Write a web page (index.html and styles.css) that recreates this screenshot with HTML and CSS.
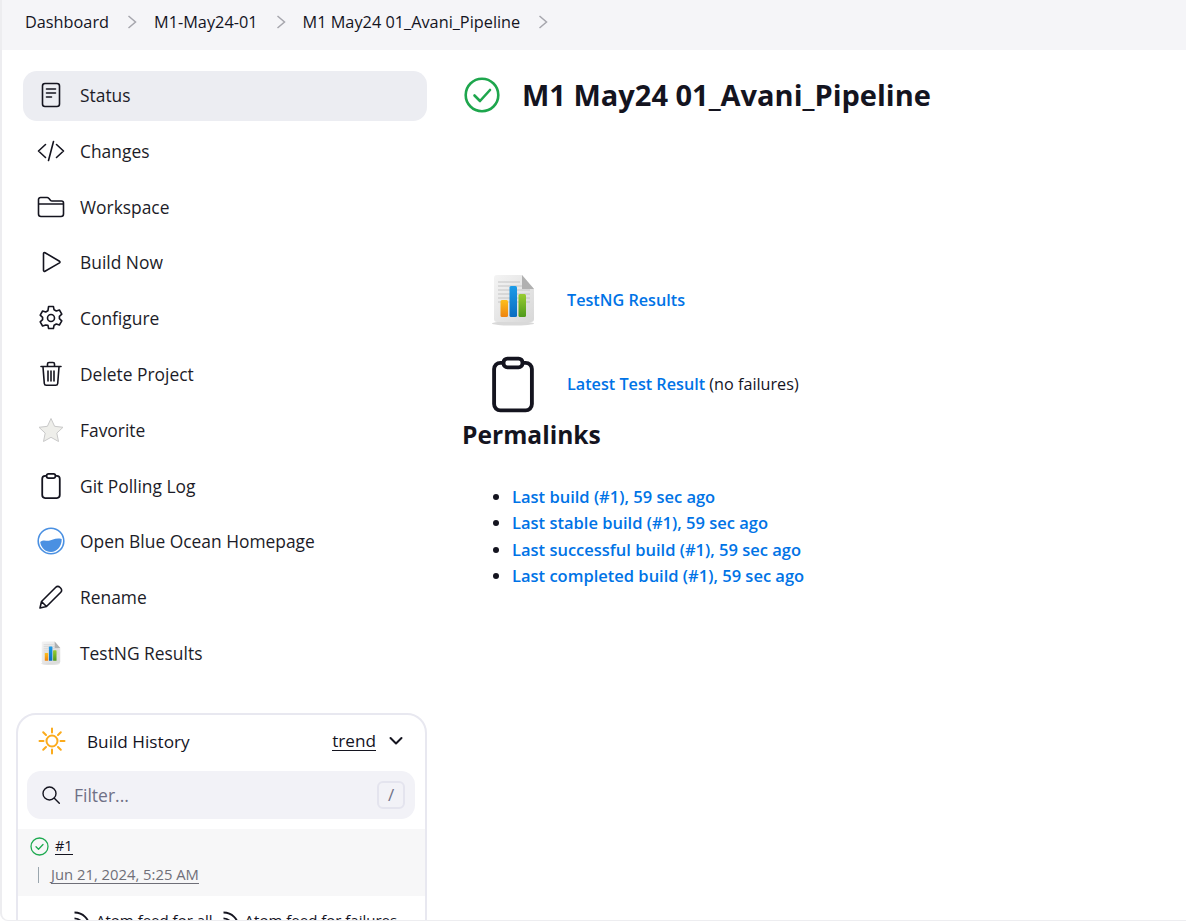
FILE: index.html
```html
<!DOCTYPE html>
<html lang="en">
<head>
<meta charset="utf-8">
<title>M1 May24 01_Avani_Pipeline</title>
<link rel="stylesheet" href="styles.css">
</head>
<body>
<svg class="defs" width="0" height="0" aria-hidden="true">
  <defs>
    <linearGradient id="pg" x1="0" y1="0" x2="1" y2="1"><stop offset="0" stop-color="#f4f4f4"/><stop offset="1" stop-color="#d8d8d8"/></linearGradient>
    <linearGradient id="o" x1="0" y1="0" x2="0" y2="1"><stop offset="0" stop-color="#fdbf1c"/><stop offset="1" stop-color="#ee8410"/></linearGradient>
    <linearGradient id="b" x1="0" y1="0" x2="0" y2="1"><stop offset="0" stop-color="#1c9ce8"/><stop offset="1" stop-color="#0a6cc0"/></linearGradient>
    <linearGradient id="g" x1="0" y1="0" x2="0" y2="1"><stop offset="0" stop-color="#98cc30"/><stop offset="1" stop-color="#4f9a1c"/></linearGradient>
    <symbol id="testng" viewBox="0 0 48 52">
      <ellipse cx="23" cy="49.500" rx="21" ry="2" fill="#d9d9d9"/>
      <path d="M7 1h25l12 14v30a3 3 0 0 1-3 3H7a3 3 0 0 1-3-3V4a3 3 0 0 1 3-3z" fill="url(#pg)"/>
      <path d="M32 1l12 14H32z" fill="#b0b0b0"/>
      <path d="M8 8h22M8 12h24M8 16h32M8 20h32M8 24h32M8 28h32" stroke="#c4c4c4" stroke-width="1"/>
      <rect x="10.500" y="26" width="7.500" height="17" rx="1.500" fill="url(#o)"/>
      <rect x="19.500" y="12" width="7.500" height="31" rx="1.500" fill="url(#b)"/>
      <rect x="28.500" y="20" width="7.500" height="23" rx="1.500" fill="url(#g)"/>
    </symbol>
    <symbol id="clip" viewBox="0 0 24 32">
      <rect x="1.200" y="3.600" width="21.600" height="27.200" rx="3.600" fill="none" stroke="currentColor" stroke-width="2.200"/>
      <rect x="6.600" y="1.200" width="10.800" height="5" rx="2.200" fill="#fff" stroke="currentColor" stroke-width="2.200"/>
    </symbol>
    <symbol id="rss" viewBox="0 0 24 24">
      <path d="M3 3c10 0 18 8 18 18M3 10c6 0 11 5 11 11" fill="none" stroke="currentColor" stroke-width="2.200"/>
    </symbol>
  </defs>
</svg>
<div class="window">
  <nav class="crumbs">
    <a class="crumb">Dashboard</a>
    <svg class="chev" viewBox="0 0 12 16"><path d="M2.500 2l7 6-7 6" /></svg>
    <a class="crumb">M1-May24-01</a>
    <svg class="chev" viewBox="0 0 12 16"><path d="M2.500 2l7 6-7 6" /></svg>
    <a class="crumb">M1 May24 01_Avani_Pipeline</a>
    <svg class="chev" viewBox="0 0 12 16"><path d="M2.500 2l7 6-7 6" /></svg>
  </nav>
  <div class="layout">
    <aside class="side">
      <ul class="tasks">
        <li class="task active">
          <span class="ti"><svg class="ic" width="26" height="26" viewBox="0 0 26 26"><rect x="4.500" y="1.500" width="17" height="23" rx="2.500"/><path d="M8.500 7h9M8.500 11h9M8.500 15h5"/></svg></span>
          <span>Status</span>
        </li>
        <li class="task">
          <span class="ti"><svg class="ic" width="28" height="26" viewBox="0 0 28 26"><path d="M8.500 6.500L1.500 13l7 6.500M19.500 6.500l7 6.500-7 6.500M16.500 3.500l-5 19"/></svg></span>
          <span>Changes</span>
        </li>
        <li class="task">
          <span class="ti"><svg class="ic" width="28" height="22" viewBox="0 0 28 22"><path d="M1.500 5V3.500a2 2 0 0 1 2-2h6.600c.8 0 1.300.4 1.900 1l1.400 1.700c.4.500 1 .8 1.700.8h9.400a2 2 0 0 1 2 2V18a2.500 2.500 0 0 1-2.500 2.500H4A2.500 2.500 0 0 1 1.500 18zM1.500 8h25"/></svg></span>
          <span>Workspace</span>
        </li>
        <li class="task">
          <span class="ti"><svg class="ic" width="26" height="26" viewBox="0 0 26 26"><path d="M5.500 4.500a1 1 0 0 1 1.500-.8l14.500 8.500a1 1 0 0 1 0 1.700L7 22.300a1 1 0 0 1-1.500-.8z"/></svg></span>
          <span>Build Now</span>
        </li>
        <li class="task">
          <span class="ti"><svg class="ic" width="26" height="26" viewBox="0 0 26 26"><circle cx="13" cy="13" r="3.500"/><path d="M10.600 1.500h4.800l.7 3.300 2.200 1.200 3.100-1 2.400 4.100-2.400 2.200v2.400l2.400 2.200-2.400 4.100-3.100-1-2.200 1.200-.7 3.300h-4.800l-.7-3.300L7.700 20l-3.100 1-2.400-4.100 2.400-2.200v-2.400L2.200 10.100l2.400-4.100 3.100 1 2.200-1.200z"/></svg></span>
          <span>Configure</span>
        </li>
        <li class="task">
          <span class="ti"><svg class="ic" width="26" height="26" viewBox="0 0 26 26"><path d="M3 5.500h20M9.500 5V3a1.500 1.500 0 0 1 1.500-1.500h4A1.500 1.500 0 0 1 16.500 3v2M5 6l1.300 16.500a2 2 0 0 0 2 1.800h9.400a2 2 0 0 0 2-1.800L21 6M10 10v10M13 10v10M16 10v10"/></svg></span>
          <span>Delete Project</span>
        </li>
        <li class="task">
          <span class="ti"><svg width="26" height="26" viewBox="0 0 26 26"><path d="M13 1.500l3.600 7.800 8.400 1-6.200 5.800 1.700 8.400L13 20.300l-7.500 4.200 1.700-8.400L1 10.300l8.400-1z" fill="#eeeeea" stroke="#c9c9c9" stroke-width="1"/></svg></span>
          <span>Favorite</span>
        </li>
        <li class="task">
          <span class="ti"><svg class="clipicon" width="20" height="26"><use href="#clip"/></svg></span>
          <span>Git Polling Log</span>
        </li>
        <li class="task">
          <span class="ti"><svg width="28" height="28" viewBox="0 0 28 28"><circle cx="14" cy="14" r="12.800" fill="#fff" stroke="#4a90e2" stroke-width="1.600"/><path d="M3.200 15c3-2.400 5.500-1 8.500-1.200 3.500-.2 6.500-3.300 13-1.800.4 7-5 13-10.700 13C8.500 25 4 21 3.200 15z" fill="#4a90e2"/></svg></span>
          <span>Open Blue Ocean Homepage</span>
        </li>
        <li class="task">
          <span class="ti"><svg class="ic" width="26" height="26" viewBox="0 0 26 26"><path d="M2 24l1.500-6.500L17.800 3.200a2.800 2.800 0 0 1 4 0l1 1a2.800 2.800 0 0 1 0 4L8.500 22.500zM3.500 17.500l5 5"/></svg></span>
          <span>Rename</span>
        </li>
        <li class="task">
          <span class="ti"><svg width="24" height="24"><use href="#testng"/></svg></span>
          <span>TestNG Results</span>
        </li>
      </ul>
      <section class="history">
        <header class="hist-head">
          <svg class="sun" width="28" height="28" viewBox="0 0 28 28"><circle cx="14" cy="14" r="5.500"/><path d="M14 1.500v4M14 22.500v4M1.500 14h4M22.500 14h4M5.200 5.200l2.800 2.800M20 20l2.800 2.800M22.800 5.200L20 8M8 20l-2.800 2.800"/></svg>
          <span class="hist-title">Build History</span>
          <a class="trend">trend</a>
          <svg class="down" width="14" height="10" viewBox="0 0 14 10"><path d="M1.500 2l5.500 5.500L12.500 2"/></svg>
        </header>
        <div class="filter">
          <svg class="ic mag" width="20" height="20" viewBox="0 0 20 20"><circle cx="8.500" cy="8.500" r="6.500"/><path d="M13.300 13.300l5 5"/></svg>
          <span class="ph">Filter...</span>
          <kbd class="key">/</kbd>
        </div>
        <div class="build">
          <div class="b-top">
            <svg class="okmini" width="19" height="19" viewBox="0 0 19 19"><circle cx="9.500" cy="9.500" r="8.500"/><path d="M6 9.800l2.500 2.500L13 7.500"/></svg>
            <a class="bnum">#1</a>
          </div>
          <div class="b-date"><a>Jun 21, 2024, 5:25 AM</a></div>
        </div>
        <div class="feeds">
          <svg class="feed" width="20" height="20"><use href="#rss"/></svg><span>Atom feed for all</span>
          <svg class="feed" width="20" height="20"><use href="#rss"/></svg><span>Atom feed for failures</span>
        </div>
      </section>
    </aside>
    <main class="content">
      <div class="title-row">
        <svg class="ok" width="36" height="36" viewBox="0 0 36 36"><circle cx="18" cy="18" r="16.300"/><path d="M10.500 18.500l5.500 5.500 10-11"/></svg>
        <h1>M1 May24 01_Avani_Pipeline</h1>
      </div>
      <div class="actions">
        <div class="action a1">
          <svg width="48" height="52"><use href="#testng"/></svg>
          <a class="link">TestNG Results</a>
        </div>
        <div class="action a2">
          <svg class="clipbig" width="42" height="57"><use href="#clip"/></svg>
          <span><a class="link">Latest Test Result</a> (no failures)</span>
        </div>
      </div>
      <h2>Permalinks</h2>
      <ul class="perma">
        <li><a class="link">Last build (#1), 59 sec ago</a></li>
        <li><a class="link">Last stable build (#1), 59 sec ago</a></li>
        <li><a class="link">Last successful build (#1), 59 sec ago</a></li>
        <li><a class="link">Last completed build (#1), 59 sec ago</a></li>
      </ul>
    </main>
  </div>
</div>
</body>
</html>
```
FILE: styles.css
```css
* { box-sizing: border-box; }
html, body { margin: 0; height: 100%; overflow: hidden; background: #fff; }
body {
  font-family: "Open Sans", "Noto Sans", "Liberation Sans", sans-serif;
  font-size: 16px;
  color: #14141f;
}
.defs { position: absolute; }
.window {
  height: 921px;
  border-left: 2px solid #ededf0;
  border-bottom: 1px solid #ededf0;
  border-bottom-left-radius: 8px;
  overflow: hidden;
}
.crumbs {
  height: 50px;
  background: #f5f5f8;
  display: flex;
  align-items: center;
  padding: 0 0 7px 23px;
  font-size: 16.300px;
  color: #14141f;
}
.chev { width: 12px; height: 16px; margin: 0 16px 0 17px; fill: none; stroke: #a6a6ad; stroke-width: 1.500; }
.layout { display: flex; }
.side { width: 430px; flex: none; padding: 21px 0 0 14px; }
.tasks { list-style: none; margin: 0 0 0 7px; padding: 0; width: 404px; }
.task {
  height: 50px;
  margin-bottom: 5.800px;
  border-radius: 14px;
  display: flex;
  align-items: center;
  padding: 0 0 2px 14px;
  gap: 15px;
  font-size: 17.400px;
  font-weight: 500;
  color: #1c1c28;
}
.task.active { background: #ecedf2; }
.ti { width: 28px; display: flex; justify-content: center; align-items: center; flex: none; }
.ic { fill: none; stroke: #14141f; stroke-width: 1.600; stroke-linecap: round; stroke-linejoin: round; }
.clipicon { color: #14141f; }
.history {
  margin-top: 34px;
  width: 411px;
  height: 300px;
  border: 2px solid #e8e8f0;
  border-radius: 20px;
  overflow: hidden;
}
.hist-head { display: flex; align-items: center; height: 53px; padding: 0 22px 0 20px; }
.sun { fill: none; stroke: #fbab1c; stroke-width: 2; stroke-linecap: round; }
.hist-title { margin-left: 21px; font-size: 17.200px; font-weight: 500; flex: 1; }
.trend { font-size: 17.200px; border-bottom: 1px solid #14141f; line-height: 18px; margin-right: 13px; }
.down { fill: none; stroke: #14141f; stroke-width: 2; stroke-linecap: round; stroke-linejoin: round; }
.filter {
  margin: 3px 10px 0 9px;
  height: 48px;
  background: #f2f2f7;
  border-radius: 14px;
  display: flex;
  align-items: center;
  padding: 0 10px 0 14px;
}
.mag { stroke-width: 1.400; }
.ph { margin-left: 13px; flex: 1; font-size: 17.500px; font-weight: 500; color: #6f7086; }
.key {
  width: 28px; height: 28px;
  border: 2px solid #e4e4ee;
  border-radius: 6px;
  display: flex; align-items: center; justify-content: center;
  font-family: inherit; font-size: 17px; color: #6f7086;
}
.build { margin-top: 10px; height: 67px; background: #f7f7f8; padding: 8px 0 0 12px; }
.b-top { display: flex; align-items: center; gap: 6px; }
.okmini { fill: none; stroke: #1eaa50; stroke-width: 1.300; stroke-linecap: round; stroke-linejoin: round; }
.bnum { font-size: 14.500px; border-bottom: 1px solid #14141f; line-height: 16px; }
.b-date { margin: 11px 0 0 8px; border-left: 1px solid #9aa6ae; padding-left: 12px; height: 16px; display: flex; align-items: center; }
.b-date a { font-size: 14.800px; color: #6f6f78; border-bottom: 1px solid #6f6f78; line-height: 17px; }
.feeds { display: flex; align-items: center; gap: 4px; padding: 14px 0 0 54px; font-size: 15px; white-space: nowrap; }
.feed { color: #14141f; flex: none; }
.feeds span { margin-right: 4px; }
.content { flex: 1; padding: 24px 0 0 31px; min-width: 0; }
.title-row { display: flex; align-items: center; gap: 22px; margin-left: 1px; height: 40px; }
.ok { fill: none; stroke: #1ea64d; stroke-width: 2.600; stroke-linecap: round; stroke-linejoin: round; flex: none; margin-top: 2px; }
h1 { margin: 0; font-size: 29px; font-weight: 700; color: #14141f; white-space: nowrap; }
.actions { margin-top: 158px; }
.action { display: flex; align-items: center; font-size: 16.200px; }
.a1 { height: 56px; margin-left: 27px; gap: 29px; }
.a2 { height: 58px; margin: 27px 0 0 29px; gap: 33px; }
.clipbig { color: #14141f; }
.link { color: #0073e6; font-weight: 600; }
h2 { margin: 6px 0 0 -1px; font-size: 24.600px; font-weight: 700; color: #14141f; line-height: 32px; }
.perma { margin: 33px 0 0; padding-left: 49px; font-size: 16.500px; line-height: 26.300px; }
```
